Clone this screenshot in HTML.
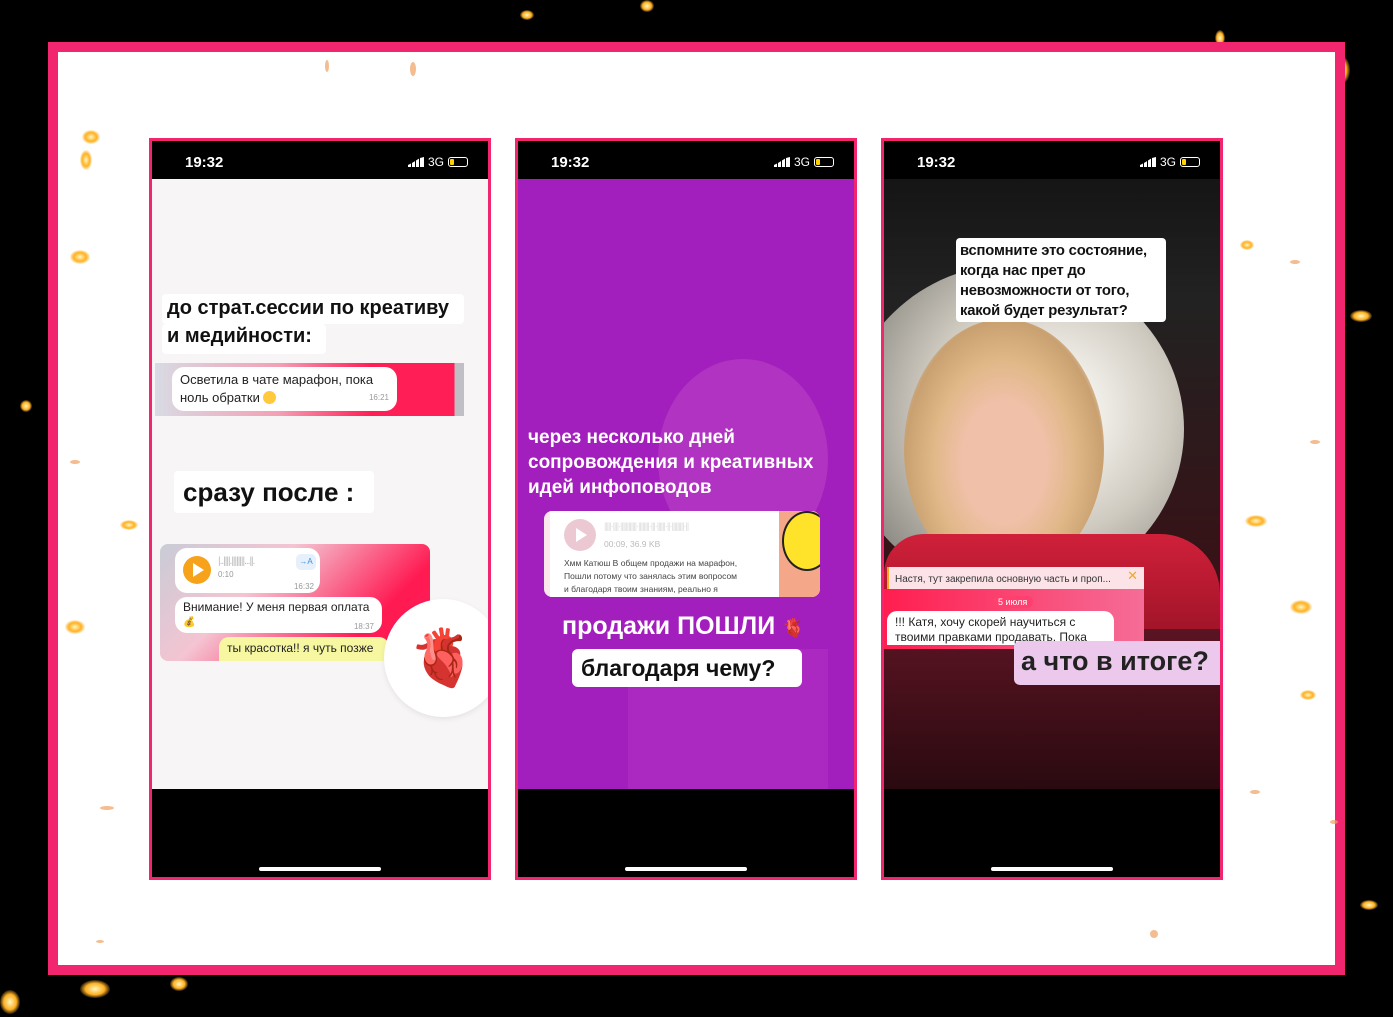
<!DOCTYPE html>
<html><head><meta charset="utf-8"><style>
*{margin:0;padding:0;box-sizing:border-box}
body{width:1393px;height:1017px;background:#000;position:relative;overflow:hidden;font-family:"Liberation Sans","DejaVu Sans",sans-serif}
.frame{position:absolute;left:48px;top:42px;width:1297px;height:933px;background:#f2266e;}
.inner{position:absolute;left:58px;top:52px;width:1277px;height:913px;background:#fff}
.sp{position:absolute;border-radius:50%;background:radial-gradient(#fff6c0,#ffb020 45%,rgba(230,80,0,0) 75%)}
.ss{position:absolute;border-radius:50%;background:#f0a060;opacity:.7}
.ph{position:absolute;top:138px;width:342px;height:742px;border:3px solid #f2266e;background:#000}
.sb{position:absolute;left:0;top:0;width:100%;height:40px;color:#fff}
.sb .t{position:absolute;left:33px;top:13px;font-size:15px;font-weight:bold}
.sb .r{position:absolute;right:20px;top:14px;font-size:12px;display:flex;align-items:center;gap:4px}
.bars{display:inline-block;width:16px;height:10px;background:linear-gradient(90deg,#fff 3px,transparent 3px,transparent 4px,#fff 4px,#fff 7px,transparent 7px,transparent 8px,#fff 8px,#fff 11px,transparent 11px,transparent 12px,#fff 12px);clip-path:polygon(0 80%,25% 60%,50% 35%,75% 10%,100% 0,100% 100%,0 100%)}
.bat{display:inline-block;width:20px;height:10px;border:1px solid #fff;border-radius:3px;position:relative}
.bat:before{content:"";position:absolute;left:1px;top:1px;width:4px;height:6px;background:#ffd200;border-radius:1px}
.scr{position:absolute;left:0;top:38px;width:336px;height:610px;overflow:hidden}
.home{position:absolute;left:107px;bottom:6px;width:122px;height:4px;background:#fff;border-radius:2px}
.tag{position:absolute;background:#fff;color:#111;font-weight:bold;border-radius:4px;white-space:nowrap}
.bub{position:absolute;background:#fff;border-radius:12px;font-size:13px;color:#222}
</style></head><body>
<div class="sp" style="left:120px;top:95px;width:30px;height:22px"></div>
<div class="sp" style="left:1240px;top:55px;width:34px;height:30px"></div>
<div class="sp" style="left:1330px;top:55px;width:20px;height:30px"></div>
<div class="sp" style="left:720px;top:55px;width:20px;height:28px"></div>
<div class="sp" style="left:1215px;top:30px;width:10px;height:16px"></div>
<div class="sp" style="left:520px;top:10px;width:14px;height:10px"></div>
<div class="sp" style="left:640px;top:0px;width:14px;height:12px"></div>
<div class="sp" style="left:80px;top:980px;width:30px;height:18px"></div>
<div class="sp" style="left:170px;top:977px;width:18px;height:14px"></div>
<div class="sp" style="left:0px;top:990px;width:20px;height:24px"></div>
<div class="sp" style="left:1350px;top:310px;width:22px;height:12px"></div>
<div class="sp" style="left:1360px;top:900px;width:18px;height:10px"></div>
<div class="sp" style="left:20px;top:400px;width:12px;height:12px"></div>
<div class="frame"></div>
<div class="inner"></div>
<div class="sp" style="left:65px;top:620px;width:20px;height:14px"></div>
<div class="sp" style="left:70px;top:250px;width:20px;height:14px"></div>
<div class="sp" style="left:120px;top:520px;width:18px;height:10px"></div>
<div class="sp" style="left:1245px;top:515px;width:22px;height:12px"></div>
<div class="sp" style="left:1290px;top:600px;width:22px;height:14px"></div>
<div class="sp" style="left:1240px;top:240px;width:14px;height:10px"></div>
<div class="sp" style="left:1300px;top:690px;width:16px;height:10px"></div>
<div class="sp" style="left:80px;top:150px;width:12px;height:20px"></div>
<div class="sp" style="left:82px;top:130px;width:18px;height:14px"></div>
<div class="ss" style="left:100px;top:806px;width:14px;height:4px"></div>
<div class="ss" style="left:96px;top:940px;width:8px;height:3px"></div>
<div class="ss" style="left:410px;top:62px;width:6px;height:14px"></div>
<div class="ss" style="left:325px;top:60px;width:4px;height:12px"></div>
<div class="ss" style="left:1290px;top:260px;width:10px;height:4px"></div>
<div class="ss" style="left:1310px;top:440px;width:10px;height:4px"></div>
<div class="ss" style="left:1250px;top:790px;width:10px;height:4px"></div>
<div class="ss" style="left:1330px;top:820px;width:8px;height:4px"></div>
<div class="ss" style="left:70px;top:460px;width:10px;height:4px"></div>
<div class="ss" style="left:1150px;top:930px;width:8px;height:8px"></div>

<!-- phone 1 -->
<div class="ph" style="left:149px">
 <div class="sb"><span class="t">19:32</span><span class="r"><span class="bars"></span>3G<span class="bat"></span></span></div>
 <div class="scr" style="background:#f7f5f6">
  <div class="tag" style="left:10px;top:115px;width:302px;height:30px;font-size:20px;padding:3px 5px">до страт.сессии по креативу</div>
  <div class="tag" style="left:10px;top:145px;width:164px;height:30px;font-size:20px;padding:1px 5px">и медийности:</div>
  <div style="position:absolute;left:3px;top:184px;width:309px;height:53px;background:linear-gradient(90deg,#d8dbe4,#f3a0b5 40%,#ff1e55 70%,#ff1e55 97%,#bfbfc5 97%)"></div>
  <div class="bub" style="left:20px;top:188px;width:225px;height:44px;padding:4px 8px;line-height:18px">Осветила в чате марафон, пока ноль обратки <span style="display:inline-block;width:13px;height:13px;border-radius:50%;background:#ffc83d;vertical-align:-2px"></span><span style="position:absolute;right:8px;bottom:4px;font-size:8px;color:#999">16:21</span></div>
  <div class="tag" style="left:22px;top:292px;width:200px;height:42px;font-size:26px;padding:6px 9px">сразу после :</div>
  <div style="position:absolute;left:8px;top:365px;width:270px;height:117px;border-radius:8px;background:linear-gradient(135deg,#c8ccd6,#f4c4d2 35%,#ff1a52 75%,#ff1e55);overflow:hidden"></div>
  <div class="bub" style="left:23px;top:369px;width:145px;height:45px"><span style="position:absolute;left:8px;top:8px;width:28px;height:28px;border-radius:50%;background:#f7a21b"></span><span style="position:absolute;left:18px;top:15px;border-left:11px solid #fff;border-top:7px solid transparent;border-bottom:7px solid transparent"></span><span style="position:absolute;left:43px;top:8px;font-size:10px;color:#bbb;letter-spacing:-1px">|..||||.||||||||...||.</span><span style="position:absolute;left:43px;top:22px;font-size:8px;color:#999">0:10</span><span style="position:absolute;right:4px;top:6px;width:20px;height:16px;background:#e6f0fb;color:#3a8ee6;font-size:8px;text-align:center;line-height:16px;border-radius:5px">→A</span><span style="position:absolute;right:6px;bottom:2px;font-size:8px;color:#999">16:32</span></div>
  <div class="bub" style="left:23px;top:418px;width:207px;height:36px;padding:3px 8px;font-size:12px">Внимание! У меня первая оплата<br><span style="font-size:10px">💰</span><span style="position:absolute;right:8px;bottom:2px;font-size:8px;color:#999">18:37</span></div>
  <div style="position:absolute;left:67px;top:458px;width:170px;height:24px;background:#f6f7a0;border-radius:10px 10px 0 0;font-size:12px;padding:4px 8px;color:#222;white-space:nowrap;overflow:hidden">ты красоткa!! я чуть позже</div>
  <div style="position:absolute;left:232px;top:420px;width:118px;height:118px;border-radius:50%;background:#fff;box-shadow:0 2px 6px rgba(0,0,0,.08);font-size:56px;text-align:center;line-height:118px">🫀</div>
 </div>
 <div class="home"></div>
</div>

<!-- phone 2 -->
<div class="ph" style="left:515px">
 <div class="sb"><span class="t">19:32</span><span class="r"><span class="bars"></span>3G<span class="bat"></span></span></div>
 <div class="scr" style="background:#a31fbd">
  <div style="position:absolute;left:140px;top:180px;width:170px;height:200px;border-radius:50%;background:rgba(200,90,200,.35)"></div>
  <div style="position:absolute;left:110px;top:470px;width:200px;height:140px;background:rgba(190,60,200,.35)"></div>
  <div style="position:absolute;left:10px;top:246px;color:#fff;font-weight:bold;font-size:19px;line-height:25px;white-space:nowrap">через несколько дней<br>сопровождения и креативных<br>идей инфоповодов</div>
  <div style="position:absolute;left:26px;top:332px;width:276px;height:86px;border-radius:8px;background:#fbe7ec;overflow:hidden">
   <div style="position:absolute;left:6px;top:0;width:230px;height:86px;background:#fff"></div>
   <div style="position:absolute;left:235px;top:0;width:41px;height:86px;background:#f5a78a"></div>
   <div style="position:absolute;left:238px;top:0;width:50px;height:60px;border-radius:50%;background:#ffe22a;border:2px solid #222"></div>
   <div style="position:absolute;left:20px;top:8px;width:32px;height:32px;border-radius:50%;background:#ecc9d2"></div>
   <div style="position:absolute;left:32px;top:17px;border-left:11px solid #fff;border-top:7px solid transparent;border-bottom:7px solid transparent"></div>
   <div style="position:absolute;left:60px;top:10px;font-size:9px;color:#ddd;letter-spacing:-1px;white-space:nowrap">|||||·||||·||||||||||||·||||||||·|||·||||||·||·|||||||||·||</div>
   <div style="position:absolute;left:60px;top:28px;font-size:8.5px;color:#bbb">00:09, 36.9 KB</div>
   <div style="position:absolute;left:20px;top:46px;font-size:8.5px;color:#444;line-height:13px;white-space:nowrap">Хмм Катюш В общем продажи на марафон,<br>Пошли потому что занялась этим вопросом<br>и благодаря твоим знаниям, реально я</div>
  </div>
  <div style="position:absolute;left:44px;top:433px;color:#fff;font-weight:bold;font-size:25px;white-space:nowrap">продажи ПОШЛИ <span style="font-size:18px">🫀</span></div>
  <div class="tag" style="left:54px;top:470px;width:230px;height:38px;font-size:23px;padding:6px 9px;border-radius:6px">благодаря чему?</div>
 </div>
 <div class="home"></div>
</div>

<!-- phone 3 -->
<div class="ph" style="left:881px">
 <div class="sb"><span class="t">19:32</span><span class="r"><span class="bars"></span>3G<span class="bat"></span></span></div>
 <div class="scr" style="background:linear-gradient(#151515,#222 120px,#3a1015 420px,#2a0a0e)">
  <div style="position:absolute;left:-40px;top:85px;width:340px;height:330px;border-radius:50%;background:radial-gradient(circle at 60% 45%,#f5f3ee 15%,#cfcac0 45%,#8f8d86 75%)"></div>
  <div style="position:absolute;left:20px;top:140px;width:200px;height:260px;border-radius:50%;background:radial-gradient(ellipse at 50% 55%,#f0c0a8 30%,#e0b888 50%,#c9a070 70%,rgba(150,120,80,0) 80%)"></div>
  <div style="position:absolute;left:0;top:355px;width:336px;height:100px;background:linear-gradient(#d0203a,#a01428);border-radius:40px 60px 0 0"></div>
  <div style="position:absolute;left:0;top:450px;width:336px;height:160px;background:linear-gradient(#5a1422,#2a0a10)"></div>
  <div class="tag" style="left:72px;top:59px;width:210px;height:84px;font-size:14.8px;line-height:20px;padding:3px 4px;letter-spacing:-.2px">вспомните это состояние,<br>когда нас прет до<br>невозможности от того,<br>какой будет результат?</div>
  <div style="position:absolute;left:3px;top:388px;width:257px;height:22px;background:#fbe3e8;font-size:10px;color:#333;padding:7px 6px 0 6px;border-left:2px solid #f5a623;white-space:nowrap">Настя, тут закрепила основную часть и проп...<span style="position:absolute;right:6px;top:1px;color:#f5a623;font-size:13px">✕</span></div>
  <div style="position:absolute;left:0;top:410px;width:260px;height:60px;background:linear-gradient(90deg,#ff1e4f,#f56d97)"></div>
  <div style="position:absolute;left:108px;top:417px;background:#ff3f6e;color:#fff;font-size:9px;padding:1px 6px;border-radius:7px">5 июля</div>
  <div class="bub" style="left:3px;top:432px;width:227px;height:34px;padding:4px 8px;font-size:12px;border-radius:10px 10px 0 0;overflow:hidden;line-height:15px">!!! Катя, хочу скорей научиться с твоими правками продавать. Пока</div>
  <div style="position:absolute;left:130px;top:462px;width:206px;height:44px;background:#ecc9ec;font-weight:bold;font-size:27px;color:#222;padding:5px 7px;border-radius:6px 0 0 6px;white-space:nowrap">а что в итоге?</div>
 </div>
 <div class="home"></div>
</div>
</body></html>
